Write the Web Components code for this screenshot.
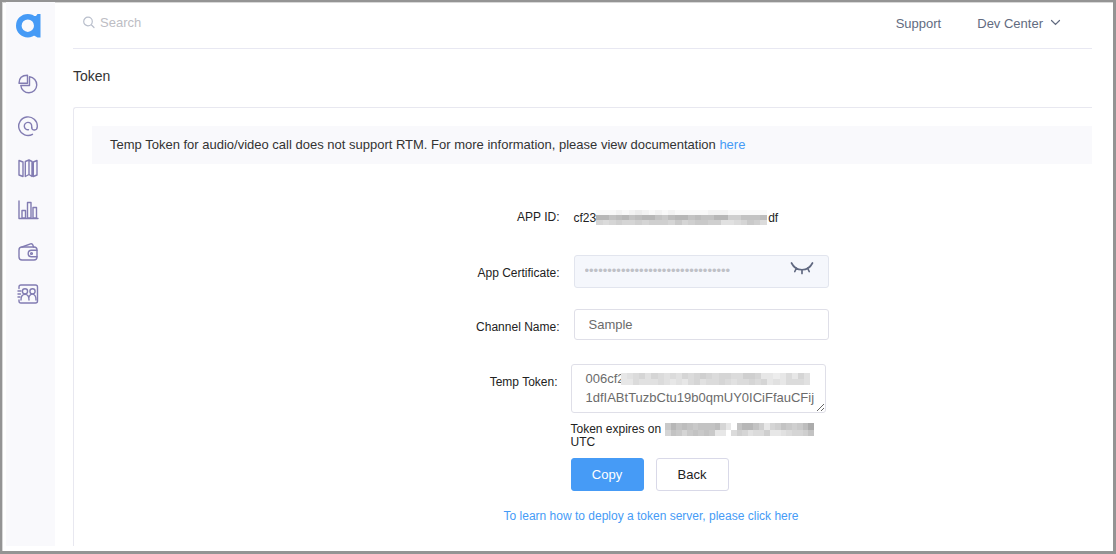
<!DOCTYPE html>
<html lang="en">
<head>
<meta charset="utf-8">
<meta name="viewport" content="width=device-width, initial-scale=1">
<title>Token</title>
<style>
  body { margin: 0; font-family: "Liberation Sans", Arial, Helvetica, sans-serif; font-size: 13px; color: #333; background: #fff; }
</style>
</head>
<body>
<app-shell>
  <side-nav slot="nav"></side-nav>
  <top-bar slot="top"></top-bar>
  <token-panel></token-panel>
</app-shell>

<script>
const define = (name, html, setup) => {
  const tpl = document.createElement('template');
  tpl.innerHTML = html;
  customElements.define(name, class extends HTMLElement {
    constructor() {
      super();
      this.attachShadow({ mode: 'open' }).append(tpl.content.cloneNode(true));
    }
    connectedCallback() { if (setup) setup(this, this.shadowRoot); }
  });
};

define('app-shell', `
  <style>
    :host { display: flex; box-sizing: border-box; min-height: 100vh; background: #fff;
      border: 2px solid #949494; border-width: 2px 3px 3px 2px; padding: 0 21px 5px 4px; gap: 18px;
      box-shadow: inset 1px 1px #d8d8d8; }
    .side { flex: 0 0 49px; display: flex; background: #f9f9fc; }
    .page { flex: 1; min-width: 0; display: flex; flex-direction: column; }
    main { flex: 1; display: flex; flex-direction: column; }
  </style>
  <div class="side"><slot name="nav"></slot></div>
  <div class="page">
    <slot name="top"></slot>
    <main><slot></slot></main>
  </div>`);

define('side-nav', `
  <style>
    :host { display: block; flex: 1; }
    nav { display: flex; flex-direction: column; align-items: center; gap: 20px; padding: 10px 6px 0 0; }
    a { display: block; height: 22px; color: #827cb2; }
    a.logo { height: 26px; margin-bottom: 15px; }
    svg { display: block; fill: none; stroke: currentColor; stroke-width: 1.4; stroke-linejoin: round; stroke-linecap: round; }
  </style>
  <nav aria-label="Main">
    <a class="logo" href="#" aria-label="Home"><svg width="26" height="28" viewBox="0 0 26 28">
      <path d="M19 4 L21 4 L22.500 2 H25.500 V25.500 H22.500 L19 23.500 Z" fill="#469bf6" stroke="none"/>
      <circle cx="12.800" cy="13.700" r="9" stroke="#469bf6" stroke-width="5.600" fill="#f9f9fc"/></svg></a>
    <a href="#" aria-label="Usage"><svg width="22" height="22" viewBox="0 0 22 22">
      <path d="M12.500 3.800 A8 8 0 1 1 3.800 12.500 H12.500 Z"/><path d="M10.500 2.200 V10.200 H2 C2 5 5 2.200 10.500 2.200 Z"/></svg></a>
    <a href="#" aria-label="Mentions"><svg width="22" height="22" viewBox="0 0 22 22">
      <path d="M15.500 19.300 A9.300 9.300 0 1 1 20.300 11.500 C20.300 16 14.700 16 14.700 12.500"/><path d="M14.700 12.500 V11 A3.700 3.700 0 1 0 11.500 14.700"/></svg></a>
    <a href="#" aria-label="Projects"><svg width="22" height="22" viewBox="0 0 22 22">
      <path d="M2 3.500 L6 5 V19.500 L2 18 Z M8.300 4.500 L12 3 V17.500 L8.300 19.500 Z M12 3 L15 4.500 V19.500 L12 17.500 M16.300 5 L20 3.500 V18 L16.300 19.500 Z"/></svg></a>
    <a href="#" aria-label="Analytics"><svg width="22" height="22" viewBox="0 0 22 22">
      <path d="M2 2 V19.500 H21 M5 11.500 H8.500 V19 H5 Z M10.500 3.500 H14 V19 H10.500 Z M16 8.500 H19.500 V19 H16 Z"/></svg></a>
    <a href="#" aria-label="Billing"><svg width="22" height="22" viewBox="0 0 22 22">
      <rect x="2" y="6" width="18" height="13" rx="3"/><path d="M5 6 L13.500 2.800 C15 2.300 16 3.300 16.500 6"/>
      <path d="M20 9.200 H14.500 A3.300 3.300 0 0 0 14.500 15.800 H20"/><circle cx="14.500" cy="12.500" r="0.900"/></svg></a>
    <a href="#" aria-label="Members"><svg width="22" height="22" viewBox="0 0 22 22">
      <path d="M2 5.500 V4 Q2 2 4 2 H18.500 Q20.500 2 20.500 4 V18 Q20.500 20 18.500 20 H4 Q2 20 2 18 V17"/>
      <path d="M1 8 H4 M1 11 H3.500 M1 14 H3"/>
      <circle cx="8" cy="8.300" r="2.600"/><circle cx="15.500" cy="8.300" r="2.600"/>
      <path d="M4 17 C4 9.500 12 9.500 12 17 M11.800 15 C12.500 9.500 19 9.500 19 17"/></svg></a>
  </nav>`);

define('top-bar', `
  <style>
    :host { display: block; }
    header { display: flex; align-items: center; height: 46px; border-bottom: 1px solid #e8e8f2; }
    label { display: flex; align-items: center; gap: 5px; margin-left: 10px; padding-bottom: 6px; color: #b9bfcc; }
    input { border: 0; padding: 0; outline: 0; width: 200px; font: inherit; background: none; }
    input::placeholder { color: #bdbdc4; opacity: 1; }
    nav { display: flex; gap: 36px; margin-left: auto; margin-right: 31px; padding-bottom: 4px; }
    a { display: flex; align-items: center; gap: 7px; color: #626b80; text-decoration: none; }
    svg { fill: none; stroke: currentColor; stroke-width: 1.2; stroke-linecap: round; }
  </style>
  <header>
    <label><svg width="12" height="13" viewBox="0 0 12 13"><circle cx="5" cy="5.500" r="4.300"/><path d="M8.500 9 L11 11.500"/></svg>
      <input type="text" placeholder="Search" aria-label="Search"></label>
    <nav aria-label="Help"><a href="#">Support</a><a href="#">Dev Center
      <svg width="11" height="8" viewBox="0 0 11 8"><path d="M1.500 1.500 L5.500 5.500 L9.500 1.500"/></svg></a></nav>
  </header>`);

/* Mosaic over private values: each hex digit in a row is the grey level of one cell. */
define('pixel-mask', `
  <style>
    :host { display: inline-block; }
    svg { display: block; width: 100%; height: 100%; }
  </style>
  <svg preserveAspectRatio="none" shape-rendering="crispEdges" aria-hidden="true"></svg>`,
  (host, root) => {
    const rows = host.getAttribute('rows').split(' ');
    const svg = root.querySelector('svg');
    svg.setAttribute('viewBox', `0 0 ${rows[0].length} ${rows.length}`);
    svg.innerHTML = rows.map((row, y) => [...row].map((c, x) => {
      const v = 165 + parseInt(c, 16) * 6;
      return `<rect x="${x}" y="${y}" width="1" height="1" fill="rgb(${v},${v},${v})"/>`;
    }).join('')).join('');
  });

define('form-row', `
  <style>
    :host { display: grid; grid-template-columns: 86px 255px; column-gap: 14px; font-size: 12px; color: #222; }
    :host([tight]) { grid-template-columns: 84px 255px; column-gap: 13px; }
    .label { text-align: right; white-space: nowrap; line-height: 14px; padding-top: var(--label-top, 0); }
  </style>
  <div class="label"><slot name="label"></slot></div>
  <div><slot></slot></div>`);

define('token-form', `
  <style>
    :host { display: block; width: 355px; font-size: 12px; color: #222; }
    .id { display: flex; align-items: center; line-height: 14px; }
    .id pixel-mask { width: 171px; height: 15px; margin-right: 1px; }
    form { display: flex; flex-direction: column; margin: 0; }
    input, textarea { display: block; box-sizing: border-box; width: 255px; border: 1px solid #dfdfe8; border-radius: 3px;
      background: #fff; font: 13px "Liberation Sans", Arial, sans-serif; color: #6b6b6b; outline: 0; margin: 0; }
    .id-row { margin-bottom: 30px; }
    .cert { --label-top: 11px; margin-bottom: 21px; }
    .channel { --label-top: 11px; margin-bottom: 24px; }
    .token { --label-top: 11px; }
    .secret { position: relative; }
    .secret input { height: 33px; padding: 0 50px 2px 10px; background: #f5f7fc; border-color: #e2e5ee; color: #bfc1c7; }
    .secret button { position: absolute; right: 15px; top: 6px; padding: 0; border: 0; background: none; color: #606880; }
    .secret svg { display: block; fill: none; stroke: currentColor; stroke-width: 1.7; stroke-linecap: round; }
    #channel { height: 31px; padding: 0 14px; }
    .area { position: relative; }
    textarea { height: 49px; padding: 4px 0 0 14px; line-height: 19px; resize: both; overflow: hidden; white-space: pre; }
    .area pixel-mask { position: absolute; left: 50px; top: 9px; width: 189px; height: 12px; }
    .expiry { margin: 10px 0 9px; line-height: 13px; }
    .expiry pixel-mask { width: 149px; height: 13px; vertical-align: -3px; }
    .actions { display: flex; gap: 12px; }
    .actions button { box-sizing: border-box; width: 73px; height: 33px; border-radius: 3px; border: 1px solid #d9d9e8;
      background: #fff; color: #222; font: 13px "Liberation Sans", Arial, sans-serif; padding: 0; }
    .actions .primary { background: #469bf6; border-color: #469bf6; color: #fff; }
    .more { margin-top: 18px; text-align: center; line-height: 14px; }
    .more a { color: #469bf6; text-decoration: none; white-space: nowrap; }
  </style>
  <form>
    <form-row class="id-row"><span slot="label">APP ID:</span>
      <div class="id"><span>cf23</span><pixel-mask rows="eeededcdededeeeeedddeeeeee 33543543356433545533775554 8987887877786876677aa98679"></pixel-mask><span>df</span></div></form-row>
    <form-row class="cert"><label slot="label" for="cert">App Certificate:</label>
      <div class="secret"><input id="cert" type="password" value="00000000000000000000000000000000" readonly>
        <button type="button" aria-label="Show certificate"><svg width="24" height="16" viewBox="0 0 24 16"><path d="M1.500 2 C6 11 18 11 22.500 2 M12 9 V12.500 M6.500 7 L4.800 10.500 M17.500 7 L19.200 10.500"/></svg></button></div></form-row>
    <form-row class="channel"><label slot="label" for="channel">Channel Name:</label>
      <input id="channel" type="text" value="Sample"></form-row>
    <form-row class="token" tight><label slot="label" for="token">Temp Token:</label>
      <div class="area"><textarea id="token">006cf2
1dfIABtTuzbCtu19b0qmUY0ICiFfauCFij</textarea>
        <pixel-mask rows="ba98a89a9a8987898899778bbcb9b8a bb9aaa9abab98a9989a99898bab999a"></pixel-mask></div>
      <p class="expiry">Token expires on <pixel-mask rows="63545655548bf53357b87567641 856865656bbf978a997bba98875"></pixel-mask> UTC</p>
      <div class="actions"><button class="primary" type="button">Copy</button><button type="button">Back</button></div>
    </form-row>
    <div class="more"><a href="#">To learn how to deploy a token server, please click here</a></div>
  </form>`);

define('token-panel', `
  <style>
    :host { flex: 1; display: flex; flex-direction: column; }
    h1 { margin: 18px 0 22px; font-size: 14px; line-height: 18px; font-weight: 400; color: #333; }
    section { flex: 1; border: 1px solid #e8e8f0; border-width: 1px 0 0 1px; border-radius: 3px 0 0 0; padding: 18px 0 12px 18px; }
    .notice { margin: 0 0 46px; padding: 0 18px; line-height: 38px; background: #f9f9fc; color: #333; }
    .notice a { color: #469bf6; text-decoration: none; }
    .center { display: flex; justify-content: center; padding-left: 118px; }
  </style>
  <h1>Token</h1>
  <section>
    <p class="notice">Temp Token for audio/video call does not support RTM. For more information, please view documentation <a href="#">here</a></p>
    <div class="center"><token-form></token-form></div>
  </section>`);
</script>
</body>
</html>
